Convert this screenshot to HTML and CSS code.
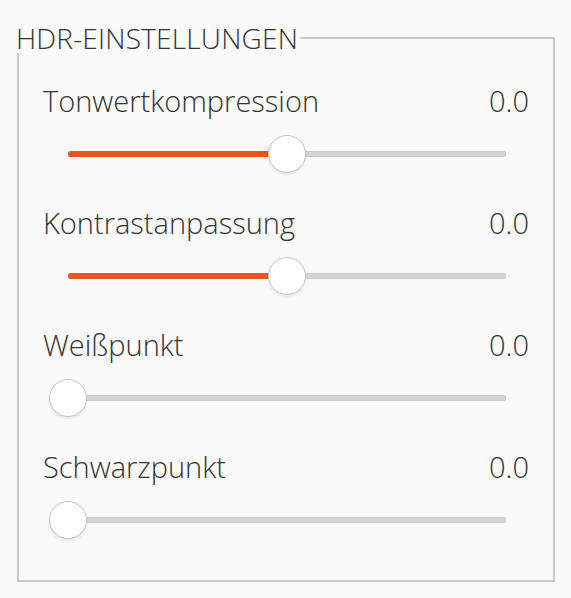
FILE: index.html
```html
<!DOCTYPE html>
<html lang="de">
<head>
<meta charset="utf-8">
<title>HDR-Einstellungen</title>
<link rel="stylesheet" href="styles.css">
</head>
<body>
<fieldset class="group">
  <legend class="group-title">HDR-EINSTELLUNGEN</legend>
  <div class="row">
    <div class="row-head"><span class="label">Tonwertkompression</span><span class="value">0.0</span></div>
    <div class="slider"><div class="track"><div class="fill" style="width:50%"></div><div class="knob" style="left:50%"></div></div></div>
  </div>
  <div class="row">
    <div class="row-head"><span class="label">Kontrastanpassung</span><span class="value">0.0</span></div>
    <div class="slider"><div class="track"><div class="fill" style="width:50%"></div><div class="knob" style="left:50%"></div></div></div>
  </div>
  <div class="row">
    <div class="row-head"><span class="label">Weißpunkt</span><span class="value">0.0</span></div>
    <div class="slider"><div class="track"><div class="fill" style="width:0%"></div><div class="knob" style="left:0%"></div></div></div>
  </div>
  <div class="row">
    <div class="row-head"><span class="label">Schwarzpunkt</span><span class="value">0.0</span></div>
    <div class="slider"><div class="track"><div class="fill" style="width:0%"></div><div class="knob" style="left:0%"></div></div></div>
  </div>
</fieldset>
</body>
</html>
```
FILE: styles.css
```css
html, body {
  margin: 0;
  padding: 0;
  background: #fafafa;
}
body {
  font-family: "Open Sans", "DejaVu Sans", sans-serif;
  font-weight: 300;
  color: #333333;
  padding: 23px 16px 0 17px;
}
.group {
  box-sizing: border-box;
  width: 538px;
  height: 559px;
  margin: 0;
  padding: 30px 24px 0 24px;
  border: 2px solid #c9c9c9;
}
.group-title {
  font-size: 28px;
  line-height: 30px;
  padding: 0;
  margin-left: -27px;
  padding-right: 2px;
  letter-spacing: 0.2px;
}
.row {
  height: 122px;
  display: flex;
  flex-direction: column;
}
.row-head {
  display: flex;
  justify-content: space-between;
  align-items: baseline;
  font-size: 29px;
  line-height: 36px;
}
.slider {
  padding: 0 23px 0 25px;
  margin-top: 32px;
}
.track {
  position: relative;
  height: 6px;
  border-radius: 3px;
  background: #d6d6d6;
  box-shadow: inset 0 0 0 1px #cacaca;
}
.fill {
  height: 100%;
  border-radius: 3px;
  background: #e95420;
}
.knob {
  position: absolute;
  top: 50%;
  width: 36px;
  height: 36px;
  margin: -19px 0 0 -19px;
  border: 1px solid #c6c6c6;
  border-radius: 50%;
  background: #ffffff;
  box-shadow: 0 2px 3px rgba(0,0,0,0.08);
}
```
